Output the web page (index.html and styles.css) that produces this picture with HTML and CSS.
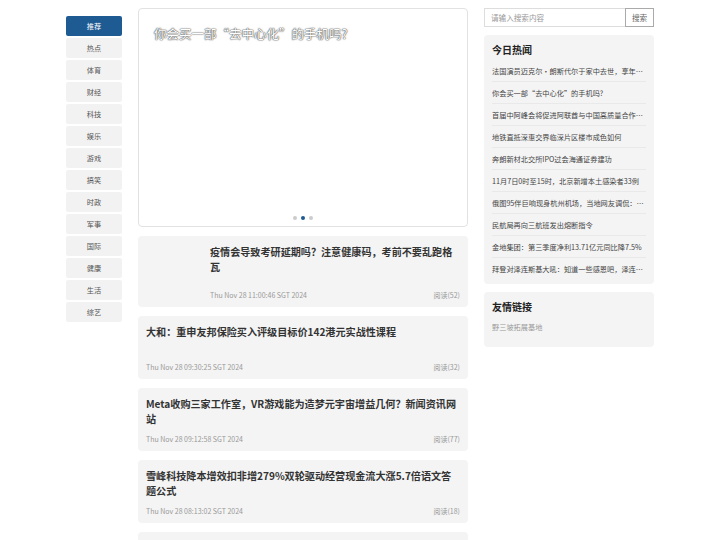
FILE: index.html
```html
<!DOCTYPE html>
<html lang="zh">
<head>
<meta charset="utf-8">
<title>新闻</title>
<link rel="stylesheet" href="styles.css">
</head>
<body>
<div class="page">
  <nav class="nav">
    <a class="nav-item active">推荐</a>
    <a class="nav-item">热点</a>
    <a class="nav-item">体育</a>
    <a class="nav-item">财经</a>
    <a class="nav-item">科技</a>
    <a class="nav-item">娱乐</a>
    <a class="nav-item">游戏</a>
    <a class="nav-item">搞笑</a>
    <a class="nav-item">时政</a>
    <a class="nav-item">军事</a>
    <a class="nav-item">国际</a>
    <a class="nav-item">健康</a>
    <a class="nav-item">生活</a>
    <a class="nav-item">综艺</a>
  </nav>

  <main class="main">
    <div class="carousel">
      <div class="carousel-title">你会买一部“去中心化”的手机吗?</div>
      <div class="dots"><span class="dot"></span><span class="dot on"></span><span class="dot"></span></div>
    </div>

    <article class="card with-img">
      <div class="thumb"></div>
      <div class="card-body">
        <h3 class="card-title">疫情会导致考研延期吗？注意健康码，考前不要乱跑格瓦</h3>
        <div class="meta"><span>Thu Nov 28 11:00:46 SGT 2024</span><span>阅读(52)</span></div>
      </div>
    </article>

    <article class="card">
      <h3 class="card-title">大和：重申友邦保险买入评级目标价142港元实战性课程</h3>
      <div class="meta"><span>Thu Nov 28 09:30:25 SGT 2024</span><span>阅读(32)</span></div>
    </article>

    <article class="card">
      <h3 class="card-title">Meta收购三家工作室，VR游戏能为造梦元宇宙增益几何？新闻资讯网站</h3>
      <div class="meta"><span>Thu Nov 28 09:12:58 SGT 2024</span><span>阅读(77)</span></div>
    </article>

    <article class="card">
      <h3 class="card-title">雪峰科技降本增效扣非增279%双轮驱动经营现金流大涨5.7倍语文答题公式</h3>
      <div class="meta"><span>Thu Nov 28 08:13:02 SGT 2024</span><span>阅读(18)</span></div>
    </article>

    <article class="card">
      <h3 class="card-title">&nbsp;</h3>
      <div class="meta"><span>&nbsp;</span><span></span></div>
    </article>
  </main>

  <aside class="side">
    <form class="search">
      <input class="search-input" type="text" placeholder="请输入搜索内容">
      <button class="search-btn" type="button">搜索</button>
    </form>

    <section class="box">
      <h2 class="box-title">今日热闻</h2>
      <ul class="hot-list">
        <li>法国演员迈克尔·朗斯代尔于家中去世，享年89岁</li>
        <li>你会买一部“去中心化”的手机吗?</li>
        <li>首届中阿峰会将促进阿联酋与中国高质量合作发展</li>
        <li>地铁直抵深惠交界临深片区楼市成色如何</li>
        <li>奔朗新材北交所IPO过会海通证券建功</li>
        <li>11月7日0时至15时，北京新增本土感染者33例</li>
        <li>俄图95伴巨响现身杭州机场，当地网友调侃：太吵了</li>
        <li>民航局再向三航班发出熔断指令</li>
        <li>金地集团：第三季度净利13.71亿元同比降7.5%</li>
        <li>拜登对泽连斯基大吼：知道一些感恩吧，泽连斯基</li>
      </ul>
    </section>

    <section class="box links">
      <h2 class="box-title">友情链接</h2>
      <a class="link">野三坡拓展基地</a>
    </section>
  </aside>
</div>
</body>
</html>
```

FILE: styles.css
```css
* { box-sizing: border-box; }
html, body { margin: 0; padding: 0; background: #fff; }
body {
  font-family: "Noto Sans CJK SC", "Noto Sans", sans-serif;
  color: #333;
  overflow: hidden;
  height: 540px;
}
.page {
  width: 588px;
  margin: 0 auto;
  padding-top: 8px;
  display: grid;
  grid-template-columns: 56px 330px 170px;
  column-gap: 16px;
  align-items: start;
}

/* nav */
.nav {
  margin-top: 8px;
  display: flex;
  flex-direction: column;
  gap: 2px;
}
.nav-item {
  height: 20px;
  line-height: 20px;
  text-align: center;
  font-size: 7.2px;
  color: #555;
  background: #f2f2f2;
  border-radius: 2px;
}
.nav-item.active {
  background: #1f5b93;
  color: #fff;
}

/* main */
.main {
  display: flex;
  flex-direction: column;
  gap: 9px;
}
.carousel {
  height: 219px;
  border: 1px solid #e2e2e2;
  border-radius: 4px;
  background: #fff;
  display: flex;
  flex-direction: column;
  justify-content: space-between;
  padding: 16px 15px 6px;
}
.carousel-title {
  font-size: 12.5px;
  line-height: 17px;
  color: #fff;
  text-shadow: 0 0 1px #555, 0 0 1px #555, 0 0 2px #777;
}
.dots {
  display: flex;
  justify-content: center;
  gap: 4px;
}
.dot {
  width: 4px;
  height: 4px;
  border-radius: 50%;
  background: #ccc;
}
.dot.on { background: #1f5b93; }

.card {
  background: #f4f4f4;
  border-radius: 4px;
  padding: 8px 8px 7px;
  display: flex;
  flex-direction: column;
  gap: 8px;
}
.card.with-img {
  flex-direction: row;
  gap: 8px;
  padding-bottom: 7px;
}
.thumb {
  width: 56px;
  height: 56px;
  flex: none;
}
.card-body {
  flex: 1;
  display: flex;
  flex-direction: column;
  justify-content: space-between;
}
.card-title {
  margin: 0;
  font-size: 10.1px;
  line-height: 15px;
  min-height: 30px;
  font-weight: 700;
  color: #333;
}
.meta {
  display: flex;
  justify-content: space-between;
  font-size: 7px;
  line-height: 10px;
  color: #999;
}

/* side */
.side {
  display: flex;
  flex-direction: column;
  gap: 8px;
}
.search {
  display: flex;
  height: 19px;
  margin: 0;
}
.search-input {
  flex: 1;
  min-width: 0;
  height: 19px;
  border: 1px solid #ddd;
  border-right: none;
  padding: 0 6px;
  font-family: inherit;
  font-size: 7.6px;
  color: #333;
  outline: none;
}
.search-input::placeholder { color: #999; }
.search-btn {
  width: 29px;
  height: 19px;
  border: 1px solid #aaa;
  background: #fff;
  padding: 0;
  font-family: inherit;
  font-size: 7.6px;
  color: #666;
}
.box {
  background: #f4f4f4;
  border-radius: 4px;
  padding: 8px 8px 4px;
}
.box-title {
  margin: 0 0 4px;
  font-size: 10px;
  line-height: 13px;
  font-weight: 700;
  color: #222;
}
.hot-list {
  list-style: none;
  margin: 0;
  padding: 0;
}
.hot-list li {
  height: 22px;
  line-height: 22px;
  font-size: 7.2px;
  color: #444;
  white-space: nowrap;
  overflow: hidden;
  text-overflow: ellipsis;
  border-bottom: 1px solid #e9e9e9;
}
.hot-list li:last-child { border-bottom: none; }
.links { padding-bottom: 13px; }
.links .box-title { margin-bottom: 7px; }
.link {
  display: block;
  font-size: 7.2px;
  line-height: 14px;
  color: #999;
}
```
